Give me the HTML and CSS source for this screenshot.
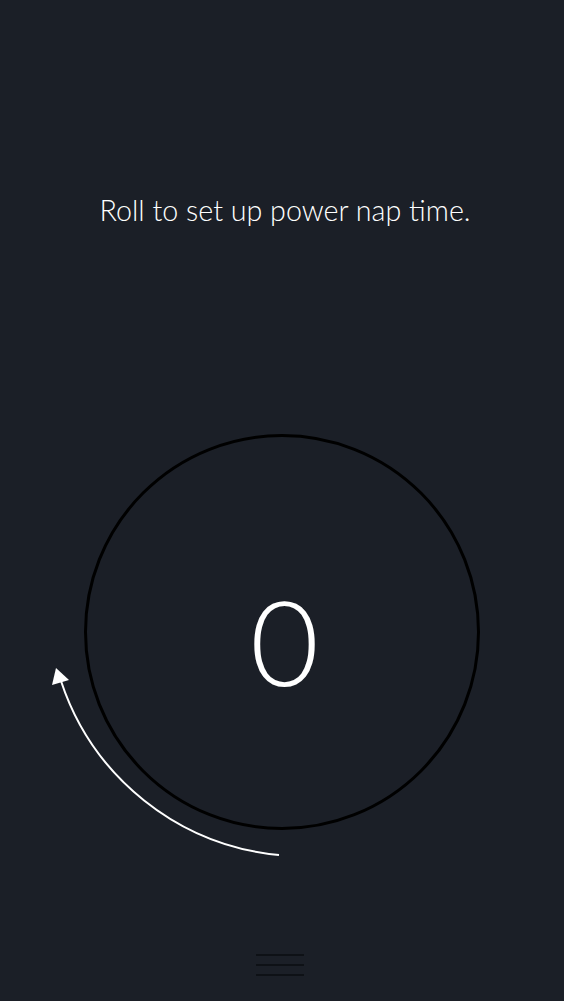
FILE: index.html
```html
<!DOCTYPE html>
<html lang="en">
<head>
    <meta charset="UTF-8">
    <meta name="viewport" content="width=device-width, initial-scale=1.0">
    <title>Power Nap</title>
    <link rel="stylesheet" href="styles.css">
</head>
<body>

    <div class="screen">
        <h1 class="title">Roll to set up power nap time.</h1>

        <div class="dial-area">
            <div class="dial">
                <span class="dial-value">0</span>
            </div>

            <!-- hint arrow beside the dial -->
            <svg class="roll-hint" width="564" height="440" viewBox="0 0 564 440">
                <path d="M279 421 A255 255 0 0 1 61 247" fill="none" stroke="#ffffff" stroke-width="2"/>
                <polygon points="56,234 52,251 69,246" fill="#ffffff"/>
            </svg>
        </div>

        <div class="menu-button">
            <span></span>
            <span></span>
            <span></span>
        </div>
    </div>

</body>
</html>
```

FILE: styles.css
```css
body {
    margin: 0;
    padding: 0;
    background: #1b1f27;
    font-family: 'Lato', 'Open Sans', sans-serif;
    color: #ffffff;
    overflow: hidden;
}

.screen {
    height: 1001px;
    display: flex;
    flex-direction: column;
    align-items: center;
}

.title {
    margin: 193px 0 0 6px;
    font-size: 28.7px;
    line-height: 34px;
    font-weight: 300;
    letter-spacing: 0;
}

.dial-area {
    position: relative;
    width: 564px;
    margin-top: 207px;
    display: flex;
    justify-content: center;
}

.dial {
    width: 396px;
    height: 396px;
    box-sizing: border-box;
    border: 3px solid #000000;
    border-radius: 50%;
    display: flex;
    justify-content: center;
    align-items: center;
}

.dial-value {
    font-size: 119px;
    font-weight: 300;
    padding: 16px 0 0 5px;
}

.roll-hint {
    position: absolute;
    top: 0;
    left: 0;
}

.menu-button {
    margin-top: auto;
    margin-bottom: 25px;
    margin-left: -4px;
    width: 48px;
    display: flex;
    flex-direction: column;
    gap: 8px;
}

.menu-button span {
    display: block;
    height: 2px;
    background: #0e1116;
}
```
